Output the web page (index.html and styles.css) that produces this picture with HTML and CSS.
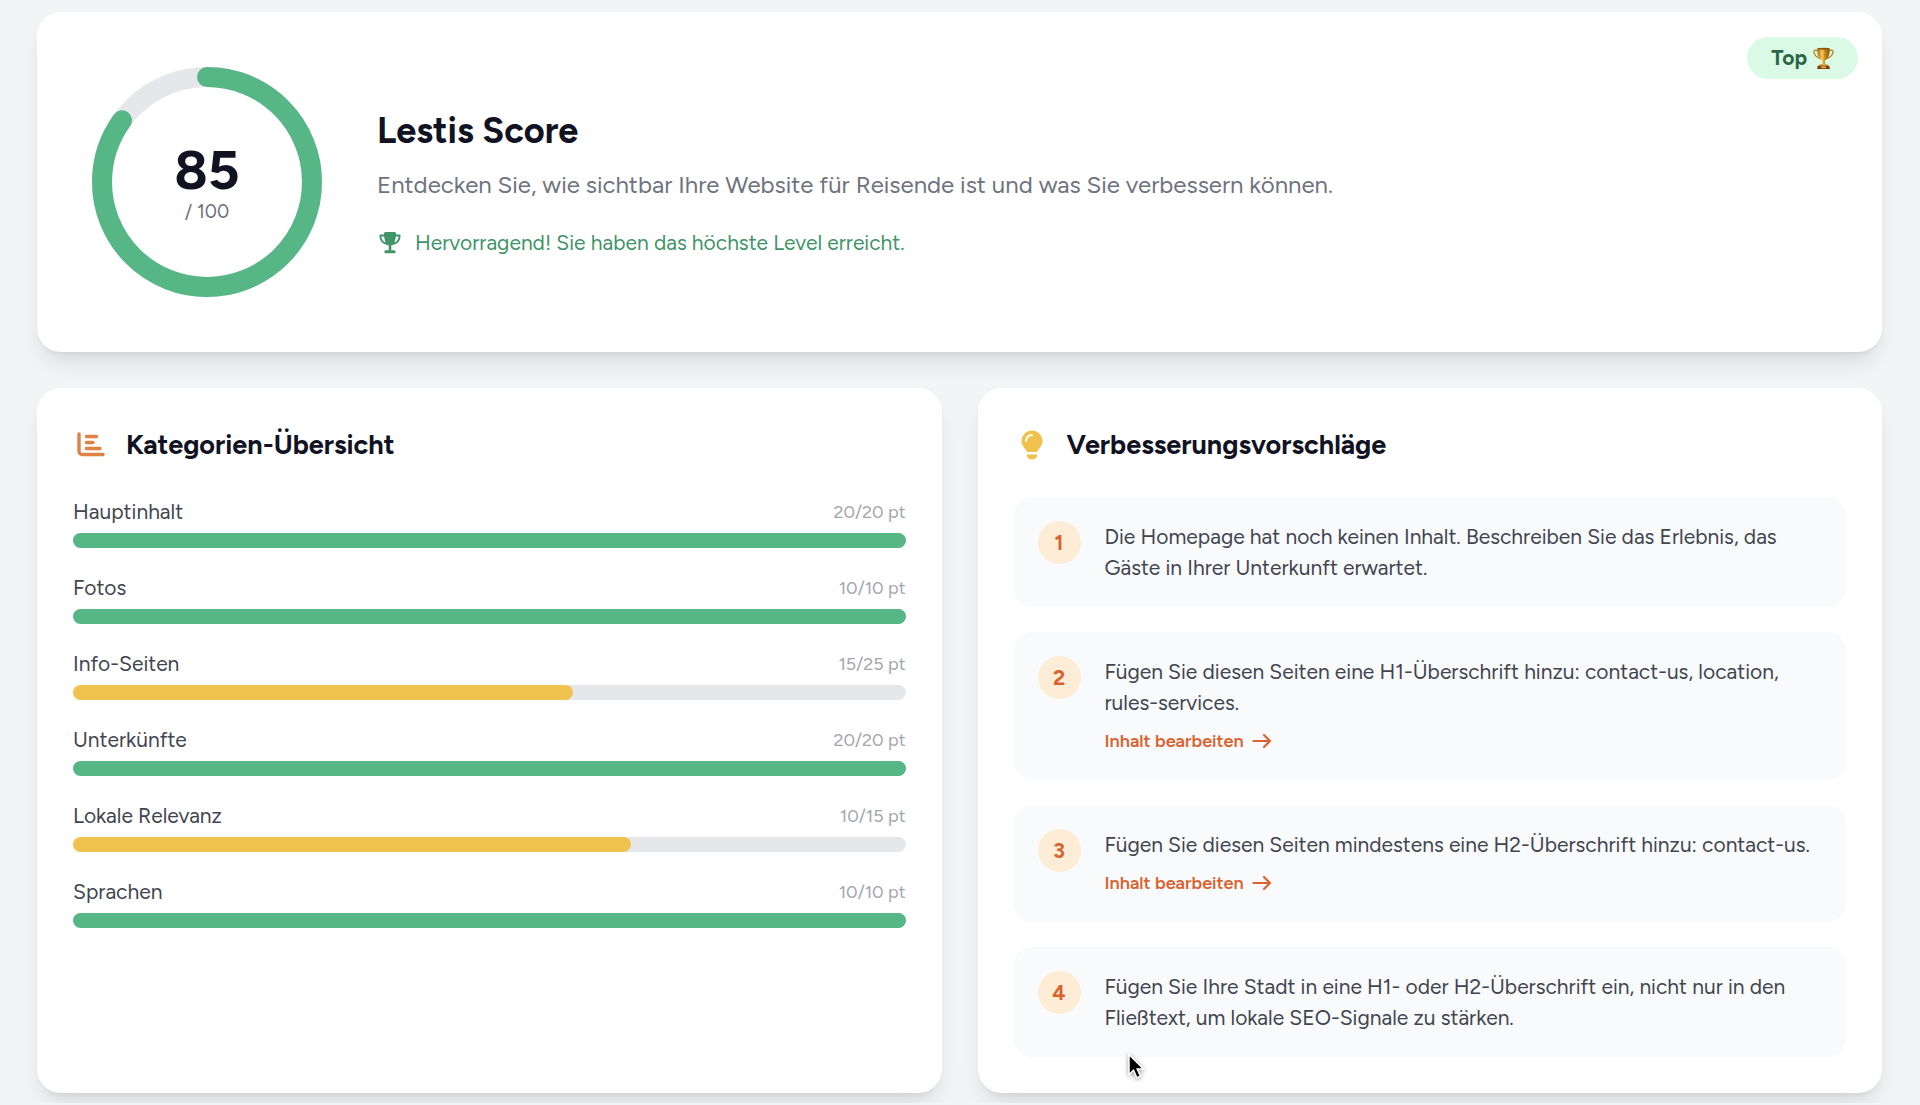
FILE: index.html
```html
<!DOCTYPE html>
<html lang="de">
<head>
  <meta charset="UTF-8" />
  <meta name="viewport" content="width=device-width, initial-scale=1.0"/>
  <title>Lestis Score</title>
  <link rel="stylesheet" href="styles.css">
</head>
<body>

  <main>
    <section class="card score-card">
      <div class="ring">
        <svg viewBox="0 0 244 244" aria-hidden="true">
          <circle class="ring-track" cx="122" cy="122" r="105" />
          <circle class="ring-value" cx="122" cy="122" r="105" pathLength="100" stroke-dasharray="85 100" transform="rotate(-90 122 122)" />
        </svg>
        <div class="ring-label">
          <strong>85</strong>
          <span>/ 100</span>
        </div>
      </div>

      <div class="score-info">
        <h1>Lestis Score</h1>
        <p class="subtitle">Entdecken Sie, wie sichtbar Ihre Website für Reisende ist und was Sie verbessern können.</p>
        <p class="level">
          <svg viewBox="0 0 26 24" aria-hidden="true">
            <path d="M8 4.500H3.300c0 5 2.500 7.500 7 8.500M18 4.500h4.700c0 5-2.500 7.500-7 8.500" fill="none" stroke="currentColor" stroke-width="1.800" stroke-linecap="round" stroke-linejoin="round"/>
            <path d="M8.500 1h9A1.500 1.500 0 0 1 19 2.600c-.1 5.800-1.300 10-4.700 11.900v4.800h2.900a1.500 1.500 0 0 1 0 3H8.800a1.500 1.500 0 0 1 0-3h2.900v-4.800C8.300 12.600 7.100 8.400 7 2.600A1.500 1.500 0 0 1 8.500 1z" fill="currentColor"/>
          </svg>
          Hervorragend! Sie haben das höchste Level erreicht.
        </p>
      </div>

      <div class="badge">
        Top
        <svg viewBox="0 0 22 24" aria-hidden="true">
          <defs>
            <linearGradient id="gold">
              <stop offset="0" stop-color="#a8650c"/>
              <stop offset=".4" stop-color="#f6cf5a"/>
              <stop offset=".6" stop-color="#c98a1c"/>
              <stop offset="1" stop-color="#8f5208"/>
            </linearGradient>
          </defs>
          <path d="M5 4C1 2 0 5 2 8c1 2 3 3 5 4M17 4c4-2 5 1 3 4-1 2-3 3-5 4" fill="none" stroke="#b87a1c" stroke-width="1.300"/>
          <path d="M4.500 1.500h13c0 6-1 11-5 12.500v4h-3v-4c-4-1.500-5-6.500-5-12.500z" fill="url(#gold)"/>
          <ellipse cx="11" cy="1.800" rx="6.500" ry="1.100" fill="#8f5a12"/>
          <path d="M7 18h8l1 2H6z" fill="#d79a2b"/>
          <path d="M5 19.500h12l.7 3.500H4.300z" fill="#7a3f16"/>
          <path d="M8.500 20.300h5V22h-5z" fill="#e8b64a"/>
        </svg>
      </div>
    </section>

    <div class="columns">
      <section class="card">
        <h2>
          <svg class="icon-chart" viewBox="0 0 28 26" aria-hidden="true"><path d="M2 2v17.500a3 3 0 0 0 3 3h21M9.500 4.500h10M9.500 10.500h6.500M9.500 16.500h13.500" fill="none" stroke="currentColor" stroke-width="3.400" stroke-linecap="round"/></svg>
          Kategorien-Übersicht
        </h2>
        <ul class="categories">
          <li>
            <div class="category-head"><span>Hauptinhalt</span><small>20/20 pt</small></div>
            <div class="bar"><div class="bar-fill" style="width: 100%"></div></div>
          </li>
          <li>
            <div class="category-head"><span>Fotos</span><small>10/10 pt</small></div>
            <div class="bar"><div class="bar-fill" style="width: 100%"></div></div>
          </li>
          <li>
            <div class="category-head"><span>Info-Seiten</span><small>15/25 pt</small></div>
            <div class="bar"><div class="bar-fill medium" style="width: 60%"></div></div>
          </li>
          <li>
            <div class="category-head"><span>Unterkünfte</span><small>20/20 pt</small></div>
            <div class="bar"><div class="bar-fill" style="width: 100%"></div></div>
          </li>
          <li>
            <div class="category-head"><span>Lokale Relevanz</span><small>10/15 pt</small></div>
            <div class="bar"><div class="bar-fill medium" style="width: 67%"></div></div>
          </li>
          <li>
            <div class="category-head"><span>Sprachen</span><small>10/10 pt</small></div>
            <div class="bar"><div class="bar-fill" style="width: 100%"></div></div>
          </li>
        </ul>
      </section>

      <section class="card">
        <h2>
          <svg class="icon-bulb" viewBox="0 0 22 30" aria-hidden="true">
            <path d="M11 .5A10.500 10.500 0 0 0 .5 11c0 5.500 4.500 7.500 5.300 11h10.400c.8-3.500 5.300-5.500 5.300-11A10.500 10.500 0 0 0 11 .5zM5.800 24.500h10.400c0 3-2.200 5-5.200 5s-5.200-2-5.200-5z" fill="currentColor"/>
            <path d="M5 11a6 6 0 0 1 6-6" fill="none" stroke="#fff" stroke-width="1.900" stroke-linecap="round"/>
          </svg>
          Verbesserungsvorschläge
        </h2>
        <ol class="suggestions">
          <li>
            <span class="number">1</span>
            <div>
              <p>Die Homepage hat noch keinen Inhalt. Beschreiben Sie das Erlebnis, das Gäste in Ihrer Unterkunft erwartet.</p>
            </div>
          </li>
          <li>
            <span class="number">2</span>
            <div>
              <p>Fügen Sie diesen Seiten eine H1-Überschrift hinzu: contact-us, location, rules-services.</p>
              <a href="#">Inhalt bearbeiten
                <svg viewBox="0 0 20 16" aria-hidden="true"><path d="M1.500 8h16.500M12 2l6 6-6 6" fill="none" stroke="currentColor" stroke-width="2.200" stroke-linecap="round" stroke-linejoin="round"/></svg>
              </a>
            </div>
          </li>
          <li>
            <span class="number">3</span>
            <div>
              <p>Fügen Sie diesen Seiten mindestens eine H2-Überschrift hinzu: contact-us.</p>
              <a href="#">Inhalt bearbeiten
                <svg viewBox="0 0 20 16" aria-hidden="true"><path d="M1.500 8h16.500M12 2l6 6-6 6" fill="none" stroke="currentColor" stroke-width="2.200" stroke-linecap="round" stroke-linejoin="round"/></svg>
              </a>
            </div>
          </li>
          <li>
            <span class="number">4</span>
            <div>
              <p>Fügen Sie Ihre Stadt in eine H1- oder H2-Überschrift ein, nicht nur in den Fließtext, um lokale SEO-Signale zu stärken.</p>
            </div>
            <svg class="cursor" viewBox="0 0 18 27" aria-hidden="true"><path d="M2 1.500v20l4.600-4.300 3.200 7.600 3.600-1.500-3.200-7.400h6.300z" fill="#000" stroke="#fff" stroke-width="1.500"/></svg>
          </li>
        </ol>
      </section>
    </div>
  </main>

</body>
</html>
```
FILE: styles.css
```css
* { margin: 0; padding: 0; box-sizing: border-box; }
body {
  font-family: Figtree, Inter, sans-serif;
  background-color: #f3f4f6;
  color: #111322;
}
ul, ol { list-style: none; }

main {
  display: flex;
  flex-direction: column;
  gap: 36px;
  padding: 12px 38px 10px 37px;
}

.card {
  background-color: #fff;
  border-radius: 24px;
  padding: 36px;
  box-shadow: 0 15px 23px -5px rgba(0, 0, 0, 0.1), 0 6px 9px -6px rgba(0, 0, 0, 0.1);
}

/* Score */
.score-card {
  position: relative;
  display: flex;
  align-items: center;
  gap: 48px;
  padding: 48px;
}
.ring {
  display: grid;
  flex: none;
  width: 244px;
}
.ring svg, .ring-label { grid-area: 1 / 1; }
.ring circle {
  fill: none;
  stroke-width: 20;
}
.ring .ring-track { stroke: #e5e7ea; }
.ring .ring-value { stroke: #56b686; stroke-linecap: round; }
.ring-label {
  display: flex;
  flex-direction: column;
  align-items: center;
  justify-content: center;
  padding-top: 4px;
}
.ring-label strong { font-size: 55px; line-height: 56px; }
.ring-label span { font-size: 19px; line-height: 28px; color: #6d717c; }

h1 { font-size: 36px; line-height: 44px; }
.score-info { padding-top: 4px; }
.subtitle {
  margin-top: 14px;
  font-size: 24px;
  line-height: 36px;
  color: #6f737e;
}
.level {
  display: flex;
  align-items: center;
  gap: 12px;
  margin-top: 24px;
  font-size: 21px;
  line-height: 32px;
  color: #3f9468;
}
.level svg { width: 26px; height: 24px; }

.badge {
  position: absolute;
  top: 25px;
  right: 24px;
  display: flex;
  align-items: center;
  gap: 6px;
  padding: 6px 24px;
  border-radius: 24px;
  background-color: #dafae6;
  color: #2c6647;
  font-size: 21px;
  font-weight: bold;
  line-height: 30px;
}
.badge svg { width: 21px; height: 23px; }

/* Lower cards */
.columns {
  display: grid;
  grid-template-columns: 1fr 1fr;
  gap: 36px;
}
h2 {
  display: flex;
  align-items: center;
  gap: 17px;
  margin-bottom: 31px;
  font-size: 27px;
  line-height: 42px;
}
h2 svg { width: 36px; }
.icon-chart { height: 26px; color: #e08145; }
.icon-bulb { height: 30px; color: #efc24b; }

.categories {
  display: flex;
  flex-direction: column;
  gap: 25px;
}
.category-head {
  display: flex;
  align-items: center;
  justify-content: space-between;
  margin-bottom: 6px;
  font-size: 21px;
  line-height: 30px;
  color: #41454f;
}
.category-head small { font-size: 18px; color: #a3a6ad; }
.bar {
  height: 15px;
  border-radius: 8px;
  background-color: #e5e7ea;
}
.bar-fill {
  height: 100%;
  border-radius: 8px;
  background-color: #56b686;
}
.bar-fill.medium { background-color: #f0c34e; }

.suggestions {
  display: flex;
  flex-direction: column;
  gap: 25px;
}
.suggestions li {
  position: relative;
  display: flex;
  align-items: flex-start;
  gap: 24px;
  padding: 24px;
  border-radius: 18px;
  background-color: #f9fafc;
  font-size: 21px;
  line-height: 31px;
  color: #41454f;
}
.number {
  flex: none;
  width: 43px;
  border-radius: 50%;
  background-color: #fdedd7;
  color: #d9622f;
  font-weight: bold;
  line-height: 43px;
  text-align: center;
}
.suggestions a {
  display: flex;
  align-items: center;
  gap: 8px;
  margin-top: 8px;
  color: #d9622f;
  font-size: 18px;
  font-weight: 600;
  line-height: 30px;
  text-decoration: none;
}
.suggestions a svg { width: 20px; height: 16px; }

.cursor {
  position: absolute;
  left: 113px;
  bottom: -23px;
  width: 18px;
  height: 27px;
  filter: drop-shadow(0 1px 2px rgba(0, 0, 0, 0.4));
}
```
